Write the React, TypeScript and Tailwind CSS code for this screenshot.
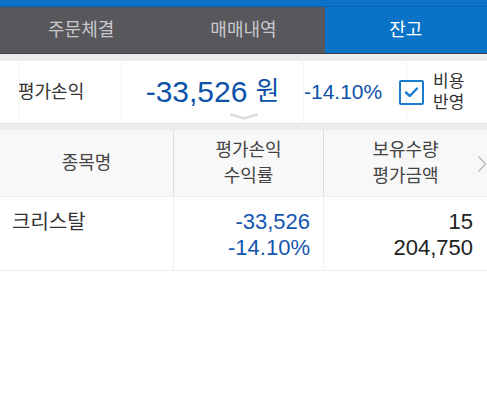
const font = { fontFamily: '"Liberation Sans", "Noto Sans CJK KR", sans-serif' };

const tabs = ['주문체결', '매매내역', '잔고'];

export default function App() {
  return (
    <div className="w-[487px] h-[414px] bg-white overflow-hidden" style={font}>
      {/* top strip */}
      <div className="h-[7px] bg-[#0b73c7] border-b border-[#0a64ad]" />

      {/* tabs */}
      <div className="flex h-[47px] bg-[#58575c] border-b border-[#3f3e42]">
        {tabs.map((t, i) => (
          <div
            key={t}
            className={
              i === 2
                ? 'flex-1 flex items-center justify-center bg-[#0b73c7] text-white text-[18px]'
                : 'flex-1 flex items-center justify-center text-[#c9c9cc] text-[18px]'
            }
          >
            {t}
          </div>
        ))}
      </div>

      <div className="h-[7px] bg-[#ececec]" />

      {/* summary */}
      <div className="relative flex h-[62px] bg-white">
        <div className="w-[20px] border-r border-[#f3f3f3]" />
        <div className="w-[102px] flex items-center border-r border-[#f3f3f3] text-[#333] text-[18px]">
          <span className="-ml-[2px]">평가손익</span>
        </div>
        <div className="w-[182px] flex items-center justify-center border-r border-[#f3f3f3] text-[#0b52a8] pb-[2px]">
          <span className="text-[30px]">-33,526</span>
          <span className="text-[26px] ml-[8px]">원</span>
        </div>
        <div className="w-[103px] flex items-center border-r border-[#f3f3f3] text-[#0b52a8] text-[21px]">
          -14.10%
        </div>
        <div className="flex-1 flex items-center -ml-[8px] gap-[9px]">
          <div className="w-[25px] h-[25px] rounded-[2px] border-2 border-[#1a7bd0] flex items-center justify-center">
            <svg width="15" height="12" viewBox="0 0 15 12">
              <path d="M2 6.5 L5.8 10 L13 2.5" fill="none" stroke="#1a7bd0" strokeWidth="2.4" strokeLinecap="round" strokeLinejoin="round" />
            </svg>
          </div>
          <div className="text-[#333] text-[17px] leading-[21px]">
            <div>비용</div>
            <div>반영</div>
          </div>
        </div>
        <svg className="absolute left-[230px] bottom-[3px]" width="28" height="7" viewBox="0 0 28 7">
          <path d="M1 1.5 L14 5.5 L27 1.5" fill="none" stroke="#dcdcdc" strokeWidth="2.5" strokeLinecap="round" />
        </svg>
      </div>

      <div className="h-[7px] bg-[#ececec] border-t border-[#e2e2e2]" />

      {/* header */}
      <div className="relative flex h-[67px] bg-[#f8f8f8] text-[#444] text-[18px] border-b border-[#eeeeee]">
        <div className="w-[174px] flex items-center justify-center border-r border-[#dddddd]">종목명</div>
        <div className="w-[150px] flex flex-col items-center justify-center leading-[26px] border-r border-[#dddddd]">
          <div>평가손익</div>
          <div>수익률</div>
        </div>
        <div className="flex-1 flex flex-col items-center justify-center leading-[26px]">
          <div>보유수량</div>
          <div>평가금액</div>
        </div>
        <svg className="absolute right-0 top-[25px]" width="10" height="18" viewBox="0 0 10 18">
          <path d="M1.5 1.5 L8.5 9 L1.5 16.5" fill="none" stroke="#bdbdbd" strokeWidth="1.5" />
        </svg>
      </div>

      {/* row */}
      <div className="flex h-[74px] border-b border-[#ededed]">
        <div className="w-[174px] pl-[12px] pt-[10px] text-[20px] text-[#333] border-r border-[#f0f0f0]">크리스탈</div>
        <div className="w-[150px] flex flex-col items-end pr-[13px] pt-[12px] text-[22px] leading-[26px] text-[#1456b0] border-r border-[#f0f0f0]">
          <div>-33,526</div>
          <div>-14.10%</div>
        </div>
        <div className="flex-1 flex flex-col items-end pr-[14px] pt-[12px] text-[22px] leading-[26px] text-[#222]">
          <div>15</div>
          <div>204,750</div>
        </div>
      </div>
    </div>
  );
}
